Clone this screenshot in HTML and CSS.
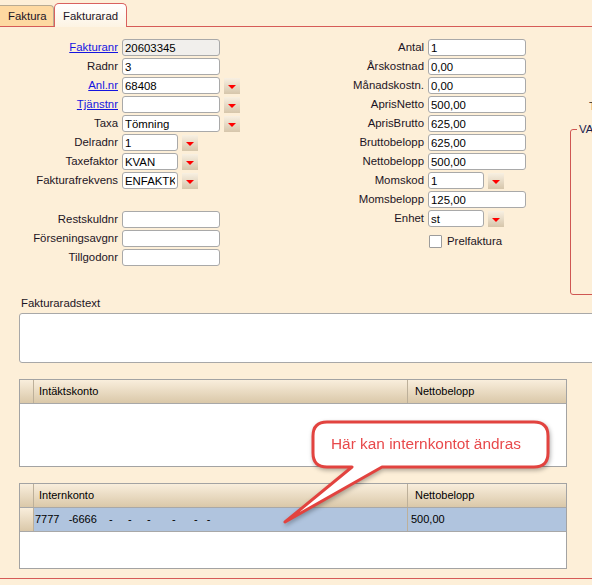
FILE: index.html
```html
<!DOCTYPE html>
<html lang="sv">
<head>
<meta charset="UTF-8" />
<meta name="viewport" content="width=device-width, initial-scale=1" />
<title>Fakturarad</title>
<link rel="stylesheet" href="styles.css">
</head>
<body>
<div id="fonster">
  <div class="flikar">
    <div class="flik">Faktura</div>
    <div class="flik aktiv">Fakturarad</div>
  </div>

  <div class="panel">
    <div class="formular">
      <div class="kolumn vanster">
        <div class="rad"><a class="etikett lank" href="#">Fakturanr</a><input class="falt last" value="20603345" readonly></div>
        <div class="rad"><label class="etikett">Radnr</label><input class="falt" value="3"></div>
        <div class="rad"><a class="etikett lank" href="#">Anl.nr</a><input class="falt" value="68408"><span class="pil"></span></div>
        <div class="rad"><a class="etikett lank" href="#">Tjänstnr</a><input class="falt" value=""><span class="pil"></span></div>
        <div class="rad"><label class="etikett">Taxa</label><input class="falt" value="Tömning"><span class="pil"></span></div>
        <div class="rad"><label class="etikett">Delradnr</label><input class="falt smal" value="1"><span class="pil"></span></div>
        <div class="rad"><label class="etikett">Taxefaktor</label><input class="falt smal" value="KVAN"><span class="pil"></span></div>
        <div class="rad"><label class="etikett">Fakturafrekvens</label><input class="falt smal" value="ENFAKTKORT"><span class="pil"></span></div>
        <div class="mellanrum"></div>
        <div class="rad"><label class="etikett">Restskuldnr</label><input class="falt" value=""></div>
        <div class="rad"><label class="etikett">Förseningsavgnr</label><input class="falt" value=""></div>
        <div class="rad"><label class="etikett">Tillgodonr</label><input class="falt" value=""></div>
      </div>

      <div class="kolumn mitten">
        <div class="rad"><label class="etikett">Antal</label><input class="falt" value="1"></div>
        <div class="rad"><label class="etikett">Årskostnad</label><input class="falt" value="0,00"></div>
        <div class="rad"><label class="etikett">Månadskostn.</label><input class="falt" value="0,00"></div>
        <div class="rad"><label class="etikett">AprisNetto</label><input class="falt" value="500,00"></div>
        <div class="rad"><label class="etikett">AprisBrutto</label><input class="falt" value="625,00"></div>
        <div class="rad"><label class="etikett">Bruttobelopp</label><input class="falt" value="625,00"></div>
        <div class="rad"><label class="etikett">Nettobelopp</label><input class="falt" value="500,00"></div>
        <div class="rad"><label class="etikett">Momskod</label><input class="falt smal" value="1"><span class="pil"></span></div>
        <div class="rad"><label class="etikett">Momsbelopp</label><input class="falt" value="125,00"></div>
        <div class="rad"><label class="etikett">Enhet</label><input class="falt smal" value="st"><span class="pil"></span></div>
        <div class="rad kryssrad"><span class="kryss"></span><span>Prelfaktura</span></div>
      </div>

      <div class="kolumn hoger">
        <div class="t-rad">T</div>
        <fieldset class="grupp">
          <legend>VA</legend>
        </fieldset>
      </div>
    </div>

    <div class="textrubrik">Fakturaradstext</div>
    <textarea class="radtext"></textarea>

    <div class="tabell forsta">
      <div class="huvud">
        <div class="radhuvud"></div>
        <div class="kol1">Intäktskonto</div>
        <div class="kol2">Nettobelopp</div>
      </div>
    </div>

    <div class="tabell andra">
      <div class="huvud">
        <div class="radhuvud"></div>
        <div class="kol1">Internkonto</div>
        <div class="kol2">Nettobelopp</div>
      </div>
      <div class="datarad vald">
        <div class="radhuvud"></div>
        <div class="kol1">7777   -6666    -     -     -       -      -   -</div>
        <div class="kol2">500,00</div>
      </div>
    </div>
  </div>

  <!-- pratbubbla ovanpå tabellerna -->
  <svg class="pratbubbla" width="285" height="120" viewBox="0 0 285 120">
    <path d="M 49,8 H 256 Q 270,8 270,22 V 39 Q 270,53 256,53 H 104 L 7,108 L 74,53 H 49 Q 35,53 35,39 V 22 Q 35,8 49,8 Z" />
    <text x="53" y="35">Här kan internkontot ändras</text>
  </svg>
</div>
</body>
</html>
```

FILE: styles.css
```css
* {
  box-sizing: border-box;
}
body {
  margin: 0;
  background: #fdefd8;
  color: #1c1424;
  font-family: "Liberation Sans", Arial, sans-serif;
  font-size: 11.4px;
  line-height: 13px;
}
#fonster {
  position: relative;
  width: 592px;
  height: 585px;
  overflow: hidden;
}

/* flikar */
.flikar {
  display: flex;
  align-items: flex-end;
  height: 26px;
}
.flik {
  width: 54px;
  height: 21px;
  padding: 4px 0 0 8px;
  background: #fed9a1;
  border: 1px solid #b8ab93;
  border-left: none;
  border-bottom: none;
  border-radius: 0 4px 0 0;
}
.flik.aktiv {
  position: relative;
  z-index: 1;
  width: 73px;
  height: 24px;
  margin-bottom: -1px;
  padding-top: 6px;
  background: linear-gradient(#ffffff, #fdf3e3);
  border: 1px solid #d9605e;
  border-bottom: none;
  border-radius: 5px 5px 0 0;
}

.panel {
  border-top: 1px solid #d65b57;
  border-bottom: 1px solid #d65b57;
  padding: 11px 0 9px 0;
}

/* formulär */
.formular {
  display: flex;
  align-items: flex-start;
}
.kolumn {
  flex: none;
}
.rad {
  display: flex;
  align-items: center;
  gap: 4px;
  height: 19px;
}
.etikett {
  display: block;
  text-align: right;
  white-space: nowrap;
}
.vanster .etikett {
  width: 118px;
}
.mitten {
  margin-left: 90px;
}
.mitten .etikett {
  width: 94px;
}
.lank {
  color: #1515e0;
  text-decoration: underline;
}
.falt {
  width: 98px;
  height: 17px;
  margin: 0;
  padding: 0 2px;
  border: 1px solid #a9a9a9;
  border-radius: 3px;
  background: #fff;
  color: #000;
  font: inherit;
  outline: none;
}
.falt.smal {
  width: 56px;
}
.falt.last {
  background: #f1efec;
}
.pil {
  display: flex;
  align-items: center;
  justify-content: center;
  width: 16px;
  height: 16px;
  background: linear-gradient(#f8f0e2, #d6c6ab);
}
.pil::after {
  content: '';
  margin-top: 2px;
  border-left: 4px solid transparent;
  border-right: 4px solid transparent;
  border-top: 4px solid #ff0000;
}
.mellanrum {
  height: 20px;
}
.kryssrad {
  margin-top: 4px;
  padding-left: 99px;
  gap: 5px;
}
.kryss {
  width: 13px;
  height: 13px;
  border: 1px solid #9c9c9c;
  border-radius: 1px;
  background: #fff;
}

.hoger {
  width: 120px;
  margin-left: 44px;
}
.t-rad {
  margin: 62px 0 10px 19px;
  color: #2a2218;
}
.grupp {
  width: 120px;
  height: 172px;
  margin: 0;
  padding: 0 0 0 6px;
  border: 1px solid #cf5652;
  border-radius: 3px;
}
.grupp legend {
  padding: 0 2px;
  color: #18204e;
}

/* fakturaradstext */
.textrubrik {
  margin: 2px 0 3px 21px;
}
.radtext {
  display: block;
  width: 600px;
  height: 50px;
  margin: 0 0 0 19px;
  border: 1px solid #a8a8a8;
  border-radius: 3px;
  background: #fff;
  resize: none;
  font: inherit;
}

/* tabeller */
.tabell {
  width: 548px;
  margin: 16px 0 0 19px;
  background: #fff;
  border: 1px solid #a3a3a3;
}
.tabell.forsta {
  height: 88px;
}
.tabell.andra {
  height: 86px;
}
.huvud,
.datarad {
  display: flex;
  height: 24px;
  border-bottom: 1px solid #a8a8a8;
}
.huvud {
  background: linear-gradient(#f9eedc, #dac8a9);
}
.datarad.vald {
  background: #b0c4de;
}
.radhuvud {
  width: 14px;
  border-right: 1px solid #bdb09a;
  background: linear-gradient(#f9eedc, #dac8a9);
}
.kol1,
.kol2 {
  display: flex;
  align-items: center;
  white-space: pre;
  color: #000;
  font-size: 11px;
}
.kol1 {
  width: 374px;
  padding-left: 5px;
  border-right: 1px solid #bdb09a;
}
.datarad .kol1 {
  padding-left: 1px;
}
.kol2 {
  flex: 1;
  padding-left: 7px;
}
.datarad .kol2 {
  padding-left: 3px;
}

/* pratbubbla */
.pratbubbla {
  position: absolute;
  left: 278px;
  top: 414px;
  pointer-events: none;
  filter: drop-shadow(1px 2px 2px rgba(0, 0, 0, 0.3));
}
.pratbubbla path {
  fill: #fff;
  stroke: #e2433f;
  stroke-width: 3;
  stroke-linejoin: round;
}
.pratbubbla text {
  fill: #e8494b;
  font-family: "Liberation Sans", Arial, sans-serif;
  font-size: 15.4px;
}
```
